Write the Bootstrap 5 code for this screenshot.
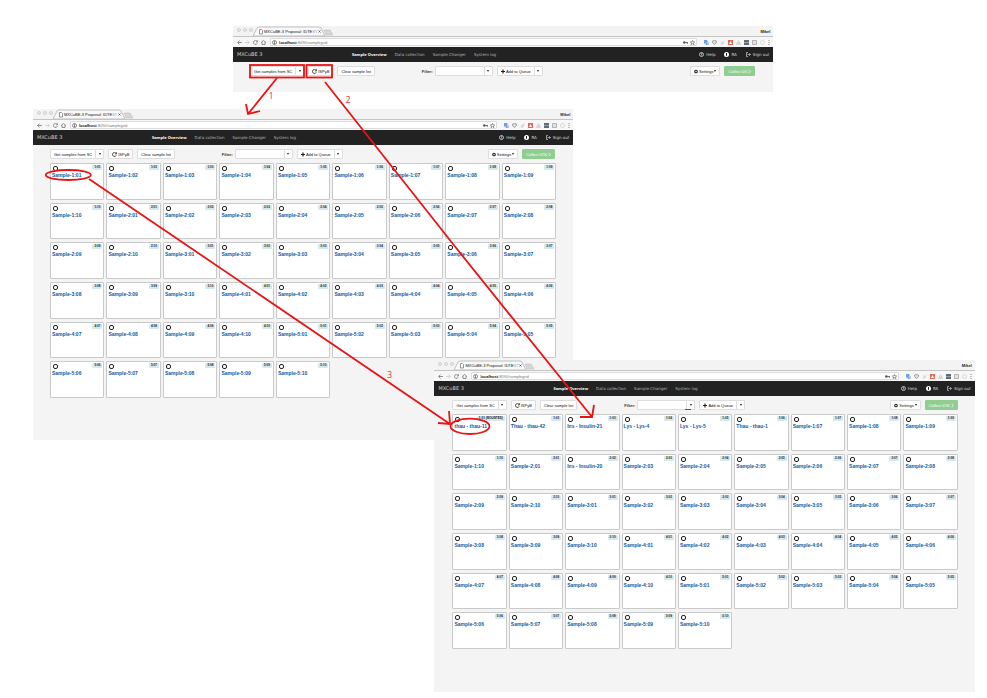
<!DOCTYPE html>
<html lang="en">
<head>
<meta charset="utf-8">
<meta name="viewport" content="width=device-width, initial-scale=1">
<title>MXCuBE 3 sample overview workflow</title>
<link href="https://cdn.jsdelivr.net/npm/bootstrap@5.3.0/dist/css/bootstrap.min.css" rel="stylesheet">
<style>
  body { font-family: "Liberation Sans", Arial, sans-serif; font-size: 4px; line-height: 5px; color: #333; background: #fff; }
  .board { min-height: 698px; }
  /* windows on the free canvas */
  .win { position: absolute; background: #f4f4f4; width: 54.75%; }
  .win-a { left: 23.61%; top: 26px; padding-bottom: 16px; }
  .win-b { left: 3.34%; top: 109px; padding-bottom: 42px; }
  .win-c { left: 44.02%; top: 360px; padding-bottom: 43px; }
  .win svg { display: block; flex: none; }
  .tabs { height: 11px; background: #f3f3f3; padding-left: 4px; padding-right: 3px; border-bottom: 1px solid #c4c4c4; }
  .dot { width: 4px; height: 4px; border: 1px solid #d2d2d2; border-radius: 50%; background: #e8e8e8; }
  .dots { gap: 2px; padding-bottom: 2px; }
  .tab-shape { width: 80px; height: 10px; }
  .tab-text { position: absolute; left: 11px; top: 3px; color: #111; white-space: nowrap; }
  .tab-text .fade-end { color: #999; }
  .user { font-weight: bold; color: #222; }
  .addr { height: 10px; background: #f7f7f7; padding: 0 3px 0 4px; gap: 3px; color: #777; }
  .url { height: 8px; background: #fff; border: 1px solid #dcdcdc; border-radius: 1px; padding: 0 1px; margin-left: 1px; gap: 2px; }
  .url b { color: #111; }
  .addr-icons { gap: 3px; padding-left: 4px; }
  .mainnav { height: 15px; background: #222; padding: 0 4px; font-family: "DejaVu Sans", Verdana, sans-serif; }
  .mainnav a { color: #b4b4b4; text-decoration: none; white-space: nowrap; }
  .mainnav .brand { font-size: 5px; color: #ccc; width: 21.6%; }
  .mainnav .current { color: #fff; font-weight: bold; font-family: "Open Sans", sans-serif; }
  .mainnav .links { gap: 8px; }
  .mainnav .right { gap: 9px; }
  .mainnav .right a { gap: 2px; color: #d8d8d8; }
  .tools { padding: 4px 18px 0 17px; }
  .win-c .tools { padding-left: 18px; padding-right: 17px; }
  .tools .tbtn { height: 10px; padding: 0 3px; font-size: 4px; line-height: 5px; border: 1px solid #ddd; border-radius: 1px; background: #fff; color: #111; display: flex; align-items: center; gap: 1px; white-space: nowrap; }
  .tools .caret-btn { padding: 0 2px; margin-left: -1px; width: 9px; justify-content: center; }
  .tools .tbtn.collect { background: #8fce90; color: #fff; border-color: #8fce90; }
  .tools .lead-group { flex: 0 0 34%; gap: 4px; }
  .filter-box { width: 50px; height: 10px; font-size: 4px; padding: 0 2px; border: 1px solid #ddd; border-radius: 1px; background: #fff; margin-left: 2px; }
  .caret { width: 0; height: 0; border: 1px solid transparent; border-top: 2px solid #222; border-bottom: 0; }
  .cards { display: grid; grid-template-columns: repeat(9, 1fr); grid-auto-rows: 1fr; column-gap: 2px; row-gap: 3px; min-height: 235px; padding: 0 17px; margin-top: 4px; }
  .win-c .cards { padding: 0 17px 0 18px; }
  .sample { background: #fff; border: 1px solid #c9c9c9; border-radius: 1px; padding: 1px 1px 0; }
  .sample input { appearance: none; width: 5px; height: 5px; border: 1px solid #222; border-radius: 2px; margin: 1px 0 0 1px; }
  .sample .loc { font-size: 3px; line-height: 4px; height: 5px; padding: 0 2px; font-weight: bold; color: #222; background: #d4e8ef; border-radius: 1px; }
  .sample .title { display: block; margin-top: 1px; font-size: 5px; line-height: 6px; font-weight: bold; color: #0f5ba3; text-decoration: none; white-space: nowrap; }
  /* annotations drawn over the windows */
  .ink { position: absolute; inset: 0; width: 100%; height: 698px; pointer-events: none; fill: none; stroke: #e81416; stroke-width: 1.8; }
  .step { position: absolute; color: #e8383a; font: 9px/10px "Open Sans", sans-serif; }
  .step-1 { left: 27.2%; top: 91px; }
  .step-2 { left: 35%; top: 95px; }
  .step-3 { left: 39.2%; top: 370px; }
</style>
<script src="https://cdn.jsdelivr.net/npm/bootstrap@5.3.0/dist/js/bootstrap.bundle.min.js"></script>
</head>
<body>
<main class="board position-relative overflow-hidden">
  <section class="win win-a" data-count="0" aria-label="Empty sample list"></section>
  <section class="win win-b" data-count="50" aria-label="Samples from sample changer"></section>
  <section class="win win-c" data-count="50" aria-label="Samples from ISPyB"></section>

  <svg class="ink" viewBox="0 0 987 698" preserveAspectRatio="none" aria-hidden="true">
    <rect x="250" y="65" width="54" height="12.500"/>
    <rect x="306.500" y="65" width="25.500" height="12.500"/>
    <path d="M277 78L248 114M246 104L248 114L260 111"/>
    <path d="M325 82L453 244L592 417M594 405L592 417L580 417"/>
    <path d="M89 179L179 240L450 424M449 411L450 424L438 423"/>
    <ellipse cx="68.300" cy="175" rx="22.500" ry="5"/>
    <ellipse cx="470" cy="426.300" rx="19.500" ry="7.700"/>
    <path d="M685 409.500H691" stroke-width="1"/>
  </svg>
  <span class="step step-1">1</span>
  <span class="step step-2">2</span>
  <span class="step step-3">3</span>
</main>

<script>
  const svg = (w, h, body) => `<svg width="${w}" height="${h}" viewBox="0 0 ${w} ${h}" aria-hidden="true">${body}</svg>`;
  const line = (d, c = '#777', w = 0.8) => `<path d="${d}" fill="none" stroke="${c}" stroke-width="${w}"/>`;
  const reload = c => svg(5, 5, line('M4.300 3.200A2 2 0 1 1 3.900 1.100M4.500 .300V1.900H2.900', c));
  const caret = '<span class="caret"></span>';

  const icons = {
    key: svg(5, 5, '<circle cx="1.300" cy="2.500" r="1.200" fill="#555"/>' + line('M2 2.500H5M4.300 2.500V4', '#555')),
    star: svg(5, 5, '<path d="M2.500 .4L3.100 1.900L4.700 2L3.500 3L3.900 4.600L2.500 3.700L1.100 4.600L1.500 3L.3 2L1.900 1.900Z" fill="none" stroke="#555" stroke-width=".6"/>'),
    translate: svg(5, 5, '<path d="M0 0H3L5 5H2L1.500 3.500H0Z" fill="#6d9fe8"/><path d="M2.500 2H5V5H3.500Z" fill="#b9c9e4"/>'),
    shield: svg(5, 5, '<path d="M.5 1L2.500 .4L4.500 1V2.600L2.500 4.700L.5 2.600Z" fill="#ddd" stroke="#888" stroke-width=".7"/>'),
    pen: svg(5, 5, line('M.5 3L2 4.500L4.500 .5M1 1.500L3.500 3.500', '#c9c9c9')),
    red: svg(5, 5, '<path d="M0 0H5V5H0Z" fill="#e2685c"/><path d="M1 4L2.500 1L4 4Z" fill="#fff"/>'),
    drive: svg(5, 5, line('M.5 4.300L2.500 .8L4.500 4.300ZM1.500 3H3.500', '#bbb', 0.7)),
    lines: svg(5, 5, '<path d="M0 0H5V5H0Z" fill="#5d6c78"/>' + line('M0 2.500H5', '#aebac3', 0.7)),
    box: svg(5, 5, '<path d="M.5 .5H4.500V4.500H.5Z" fill="#e4e4e4" stroke="#999" stroke-width=".7"/>'),
    ring: svg(5, 5, '<circle cx="2.500" cy="2.500" r="2" fill="none" stroke="#ccc" stroke-width=".7"/>'),
    more: svg(2, 5, '<path d="M.5 0H1.500V1H.5ZM.5 2H1.500V3H.5ZM.5 4H1.500V5H.5Z" fill="#888"/>')
  };

  function chrome() {
    return `
    <div class="tabs d-flex align-items-end">
      <div class="dots d-flex align-self-center"><span class="dot"></span><span class="dot"></span><span class="dot"></span></div>
      <div class="tab-shape position-relative">
        ${svg(80, 10, '<path d="M0 10L4 2Q5 1 6 1H66Q67 1 68 2L72 10Z" fill="#f9f9f9" stroke="#aaa" stroke-width=".7"/><path d="M71 4H77L80 9H73Z" fill="#d6d6d6" stroke="#bbb" stroke-width=".5"/><path d="M6.500 3.500H8.500L9.500 4.500V8H6.500Z" fill="#fff" stroke="#555" stroke-width=".6"/><path d="M65.500 4.500L67.500 6.500M67.500 4.500L65.500 6.500" stroke="#444" stroke-width=".7"/>')}
        <span class="tab-text">MXCuBE-3 Proposal: IDTE<span class="fade-end">ST</span></span>
      </div>
      <span class="user ms-auto align-self-center">Mikel</span>
    </div>
    <div class="addr d-flex align-items-center">
      ${svg(5, 5, line('M5 2.500H.8M2.500 .6L.6 2.500L2.500 4.400'))}
      ${svg(5, 5, line('M0 2.500H4.200M2.500 .6L4.400 2.500L2.500 4.400', '#ccc'))}
      ${reload('#777')}
      ${svg(5, 5, line('M0 2.700L2.500 .5L5 2.700M1 2.200V4.500H4V2.200'))}
      <div class="url d-flex align-items-center flex-grow-1">
        ${svg(5, 5, '<circle cx="2.500" cy="2.500" r="2" fill="none" stroke="#555" stroke-width=".7"/><path d="M2.500 1.200V4" stroke="#555" stroke-width=".7"/>')}
        <span class="flex-grow-1"><b>localhost</b>:8090/samplegrid</span>
        ${icons.key}${icons.star}
      </div>
      <div class="addr-icons d-flex">${['translate', 'shield', 'pen', 'red', 'drive', 'lines', 'box', 'ring', 'more'].map(n => icons[n]).join('')}</div>
    </div>
    <nav class="mainnav d-flex align-items-center">
      <a class="brand" href="#">MXCuBE 3</a>
      <div class="links d-flex">
        <a class="current" href="#">Sample Overview</a><a href="#">Data collection</a><a href="#">Sample Changer</a><a href="#">System log</a>
      </div>
      <div class="right d-flex ms-auto">
        <a class="d-flex" href="#">${svg(5, 5, '<circle cx="2.500" cy="2.500" r="2" fill="none" stroke="#ddd" stroke-width=".8"/><path d="M1.900 1.700H3V2.500H2.500V3.600" fill="none" stroke="#ddd" stroke-width=".6"/>')}Help</a>
        <a class="d-flex" href="#">${svg(5, 5, '<circle cx="2.500" cy="2.500" r="2.500" fill="#fff"/><path d="M2.500 1V3.800" stroke="#222" stroke-width="1"/>')}RA</a>
        <a class="d-flex" href="#">${svg(5, 5, line('M2 .5H.5V4.500H2M1.500 2.500H4.500M3.200 1.200L4.500 2.500L3.200 3.800', '#ccc', 0.7))}Sign out</a>
      </div>
    </nav>`;
  }

  function tools(id, total) {
    return `
    <div class="tools d-flex align-items-center">
      <div class="lead-group d-flex">
        <div class="d-flex">
          <button type="button" class="tbtn">Get samples from SC</button>
          <button type="button" class="tbtn caret-btn" aria-label="More sources">${caret}</button>
        </div>
        <button type="button" class="tbtn">${reload('#222')}ISPyB</button>
        <button type="button" class="tbtn">Clear sample list</button>
      </div>
      <div class="d-flex align-items-center">
        <label class="fw-bold" for="filter-${id}">Filter:</label>
        <input class="filter-box" id="filter-${id}" type="text">
        <button type="button" class="tbtn caret-btn" aria-label="Filter options">${caret}</button>
      </div>
      <div class="d-flex ms-1">
        <button type="button" class="tbtn">${svg(4, 5, '<path d="M2 .5V4.500M0 2.500H4" stroke="#222" stroke-width="1.200"/>')}Add to Queue</button>
        <button type="button" class="tbtn caret-btn" aria-label="Queue options">${caret}</button>
      </div>
      <div class="d-flex gap-1 ms-auto">
        <button type="button" class="tbtn">${svg(4, 5, '<circle cx="2" cy="2.500" r="1.300" fill="none" stroke="#222" stroke-width="1.100"/>')}Settings${caret}</button>
        <button type="button" class="tbtn collect">Collect 0/${total}${svg(3, 5, line('M.7 .8L2.300 2.500L.7 4.200', '#fff'))}</button>
      </div>
    </div>`;
  }

  // sample names registered in the proposal, by position
  const named = { 0: 'thau - thau-11', 1: 'Thau - thau-42', 2: 'Ins - Insulin-21', 3: 'Lys - Lys-4', 4: 'Lys - Lys-5', 5: 'Thau - thau-1', 11: 'Ins - Insulin-20' };

  function cards(count, useNames) {
    let out = '';
    for (let i = 0; i < count; i++) {
      const loc = (Math.floor(i / 10) + 1) + ':' + String(i % 10 + 1).padStart(2, '0');
      const name = useNames && named[i] || 'Sample-' + loc;
      const tag = useNames && i === 0 ? loc + ' (MOUNTED)' : loc;
      out += `<article class="sample"><div class="d-flex justify-content-between"><input type="checkbox" aria-label="Select ${name}"><span class="loc">${tag}</span></div><a class="title" href="#">${name}</a></article>`;
    }
    return `<div class="cards">${out}</div>`;
  }

  document.querySelectorAll('.win').forEach((win, i) => {
    const count = Number(win.dataset.count);
    win.innerHTML = chrome() + tools(i + 1, count) + (count ? cards(count, i === 2) : '');
  });
</script>
</body>
</html>
